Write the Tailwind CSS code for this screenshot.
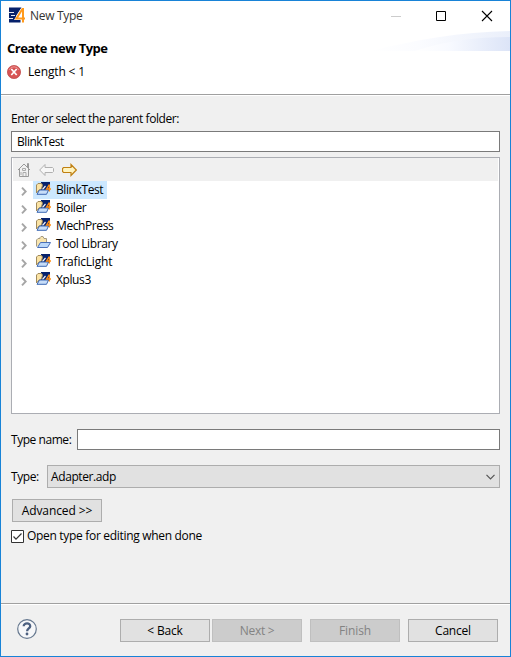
<!DOCTYPE html>
<html lang="en">
<head>
<meta charset="utf-8">
<title>New Type</title>
<script src="https://cdn.jsdelivr.net/npm/@tailwindcss/browser@4"></script>
</head>
<body class="w-[511px] h-[657px] overflow-hidden font-['Open_Sans','Noto_Sans',sans-serif] text-[12px] leading-[18px] text-black whitespace-nowrap">
<svg class="hidden">
  <symbol id="project" viewBox="0 0 15 13">
    <path d="M5 0H14V9H5z" fill="#06216b"/>
    <path d="M.5 11V3L2 1.500H5.500L6.500 3L5.500 7L3 8z" fill="#fbe3a4" stroke="#a18a5b"/>
    <path d="M6.500 7.500L9.500 4" stroke="#f1f4fa" stroke-width="1.200"/>
    <path d="M3.500 8H12.500L10.500 12.300H1z" fill="#c7ddf8" stroke="#3d68b3"/>
    <path d="M13.300 2.500L10.500 7H15M13.400 2.500V9.500" fill="none" stroke="#ff8f16" stroke-width="1.300"/>
  </symbol>
  <symbol id="folder" viewBox="0 0 15 13">
    <path d="M.5 10.5V4L2 2.5H4V1.5L5 .5H7L8 2.5H10.500V7" fill="#f9e5ae" stroke="#a49b84"/>
    <path d="M4.500 6.500H14.500L11.500 11.500H1.500z" fill="#b9d7fa" stroke="#4a70b8"/>
  </symbol>
  <symbol id="chevron" viewBox="0 0 6 9">
    <path d="M1 .7L4.700 4.500L1 8.300" fill="none" stroke="#a6a6a6" stroke-width="1.900"/>
  </symbol>
</svg>
<div class="w-[511px] h-[657px] border border-[#1883d7] bg-[#f0f0f0] flex flex-col">
  <header class="h-[94px] bg-white border-b border-[#a0a0a0] shrink-0 flex flex-col relative">
    <svg class="absolute right-0 top-[30px]" width="140" height="20" viewBox="0 0 140 20">
      <defs><linearGradient id="swoosh"><stop offset="0" stop-color="#fff"/><stop offset=".35" stop-color="#f8faff"/><stop offset="1" stop-color="#dce4f7"/></linearGradient></defs>
      <path d="M0 20C45 9 90 1 140 0V20z" fill="url(#swoosh)" opacity=".6"/>
      <path d="M45 20C75 10 105 6 140 6V20z" fill="url(#swoosh)"/>
    </svg>
    <div class="h-[29px] flex items-center text-[#333] pl-[8px]">
      <svg width="17" height="17" viewBox="0 0 17 17">
        <path d="M0 .5H12.500L7 9V12.500H11.500V15.500H0z" fill="#06216b"/>
        <path d="M0 5.500H5M2 8.500H6M0 11.500H4" stroke="#fff" stroke-width=".9"/>
        <path d="M13.700 1.500L7.500 11.500H16M14 1V15.500" fill="none" stroke="#fff" stroke-width="2.800"/>
        <path d="M13.700 1.500L7.500 11.500H16M14 1V15.500" fill="none" stroke="#ff9a1c" stroke-width="2"/>
      </svg>
      <span class="ml-[4px] tracking-[-0.3px]">New Type</span>
      <svg class="ml-auto mr-[16px]" width="103" height="12" viewBox="0 0 103 12" fill="none">
        <path d="M0 6.500H10" stroke="#ccc"/>
        <path d="M45.500 1.500H54.500V10.500H45.500z" stroke="#000"/>
        <path d="M91 1L101 11M101 1L91 11" stroke="#000" stroke-width="1.100"/>
      </svg>
    </div>
    <h1 class="mt-[9px] pl-[6px] text-[13px] font-bold tracking-[-0.5px]">Create new Type</h1>
    <div class="flex items-center mt-[6px] pl-[6px]">
      <svg width="14" height="14" viewBox="0 0 14 14"><circle cx="7" cy="7" r="6.600" fill="#d75454" stroke="#bd4545" stroke-width=".7"/><path d="M2 5A5.500 5.500 0 0 1 12 5" fill="none" stroke="#ec9191"/><path d="M4.300 4L9.700 10M9.700 4L4.300 10" stroke="#fff" stroke-width="1.700"/></svg>
      <span class="ml-[7px] tracking-[-0.15px]">Length &lt; 1</span>
    </div>
  </header>
  <main class="h-[508px] shrink-0 border-t border-white px-[10px] flex flex-col">
    <label class="mt-[14px] tracking-[-0.41px]">Enter or select the parent folder:</label>
    <div class="mt-[3px] h-[21px] w-[489px] border border-[#7a7a7a] bg-white pl-[5px] leading-[19px] tracking-[-0.45px]">BlinkTest</div>
    <div class="mt-[5px] h-[257px] w-[489px] shrink-0 border border-[#abadb3] bg-white p-px pt-0">
      <div class="h-[23px] bg-[#f0f0f0] flex items-center pl-[4px] gap-[8px]">
        <svg width="14" height="15" viewBox="0 0 14 15" fill="none" stroke="#999"><path d="M1 8L7 2L13 8M2.500 7V14.500H11.500V7M10.500 5V1.500H11.500V6"/><path d="M5.500 6.500H8.500V8.500H5.500zM6 14V10.500H9V14M4 10V13" stroke="#aaa"/></svg>
        <svg width="15" height="14" viewBox="0 0 15 14"><path d="M.7 7L6 1.500V4.500H13.500L14.500 5.500V8.500L13.500 9.500H6V12.500z" fill="#f7f7f7" stroke="#b0b0b0"/></svg>
        <svg width="15" height="14" viewBox="0 0 15 14"><path d="M14.300 7L9 1.500V4.500H1.500L.5 5.500V8.500L1.500 9.500H9V12.500z" fill="#fff4c0" stroke="#c08012" stroke-width="1.200"/></svg>
      </div>
      <div class="flex flex-col tracking-[-0.4px]">
        <div class="h-[18px] flex items-center pl-[8px]"><svg class="w-[6px] h-[9px] relative top-px"><use href="#chevron"/></svg><div class="ml-[6px] bg-[#cce8ff] h-[18px] w-[74px] flex items-center pl-[3px]"><svg class="w-[15px] h-[13px] mb-[3px]"><use href="#project"/></svg><span class="ml-[5px]">BlinkTest</span></div></div>
        <div class="h-[18px] flex items-center pl-[8px]"><svg class="w-[6px] h-[9px] relative top-px"><use href="#chevron"/></svg><svg class="ml-[9px] w-[15px] h-[13px] mb-[3px]"><use href="#project"/></svg><span class="ml-[5px]">Boiler</span></div>
        <div class="h-[18px] flex items-center pl-[8px]"><svg class="w-[6px] h-[9px] relative top-px"><use href="#chevron"/></svg><svg class="ml-[9px] w-[15px] h-[13px] mb-[3px]"><use href="#project"/></svg><span class="ml-[5px]">MechPress</span></div>
        <div class="h-[18px] flex items-center pl-[8px]"><svg class="w-[6px] h-[9px] relative top-px"><use href="#chevron"/></svg><svg class="ml-[9px] w-[15px] h-[13px] mb-[3px]"><use href="#folder"/></svg><span class="ml-[5px]">Tool Library</span></div>
        <div class="h-[18px] flex items-center pl-[8px]"><svg class="w-[6px] h-[9px] relative top-px"><use href="#chevron"/></svg><svg class="ml-[9px] w-[15px] h-[13px] mb-[3px]"><use href="#project"/></svg><span class="ml-[5px] tracking-[-0.2px]">TraficLight</span></div>
        <div class="h-[18px] flex items-center pl-[8px]"><svg class="w-[6px] h-[9px] relative top-px"><use href="#chevron"/></svg><svg class="ml-[9px] w-[15px] h-[13px] mb-[3px]"><use href="#project"/></svg><span class="ml-[5px]">Xplus3</span></div>
      </div>
    </div>
    <div class="mt-[15px] h-[21px] flex items-center w-[489px]">
      <span class="w-[66px] tracking-[-0.45px]">Type name:</span><div class="h-[21px] flex-1 bg-white border border-[#7a7a7a]"></div>
    </div>
    <div class="mt-[15px] h-[23px] flex items-center w-[489px]">
      <span class="w-[36px] tracking-[-0.4px]">Type:</span>
      <div class="h-[23px] flex-1 bg-[#e1e1e1] border border-[#adadad] flex items-center justify-between pl-[3px] pr-[4px]"><span class="tracking-[-0.4px]">Adapter.adp</span><svg width="9" height="6" viewBox="0 0 9 6"><path d="M.5 .8L4.500 4.800L8.500 .8" fill="none" stroke="#555" stroke-width="1.200"/></svg></div>
    </div>
    <div class="mt-[11px] ml-px w-[90px] h-[23px] bg-[#e1e1e1] border border-[#adadad] flex items-center justify-center tracking-[-0.1px]">Advanced &gt;&gt;</div>
    <div class="mt-[5px] h-[18px] flex items-center">
      <svg width="13" height="13" viewBox="0 0 13 13"><path d="M.5 .5H12.500V12.500H.5z" fill="#fff" stroke="#333"/><path d="M2.500 6.500L5 9.200L10.500 3.500" fill="none" stroke="#333" stroke-width="1.200"/></svg>
      <span class="ml-[3px] tracking-[-0.31px]">Open type for editing when done</span>
    </div>
  </main>
  <footer class="flex-1 border-t border-[#a0a0a0]">
    <div class="h-full border-t border-white pt-[14px] pl-[16px] flex items-start">
      <svg width="20" height="20" viewBox="0 0 20 20"><circle cx="10" cy="10" r="9.300" fill="#f6f7f9" stroke="#66788f" stroke-width="1.200"/><path d="M6.700 7.300C6.700 3.300 13.500 3.500 13.200 7.300C13 9.500 10.200 9.500 10.100 12.200" fill="none" stroke="#4c6080" stroke-width="2.300"/><circle cx="10" cy="15" r="1.400" fill="#4c6080"/></svg>
      <div class="ml-[83px] w-[90px] h-[23px] bg-[#e1e1e1] border border-[#adadad] flex items-center justify-center tracking-[-0.2px]">&lt; Back</div>
      <div class="ml-[2px] w-[90px] h-[23px] bg-[#ccc] border border-[#bfbfbf] text-[#838383] flex items-center justify-center tracking-[-0.3px]">Next &gt;</div>
      <div class="ml-[8px] w-[90px] h-[23px] bg-[#ccc] border border-[#bfbfbf] text-[#838383] flex items-center justify-center tracking-[-0.1px]">Finish</div>
      <div class="ml-[8px] w-[90px] h-[23px] bg-[#e1e1e1] border border-[#adadad] flex items-center justify-center tracking-[-0.2px]">Cancel</div>
    </div>
  </footer>
</div>
</body>
</html>
